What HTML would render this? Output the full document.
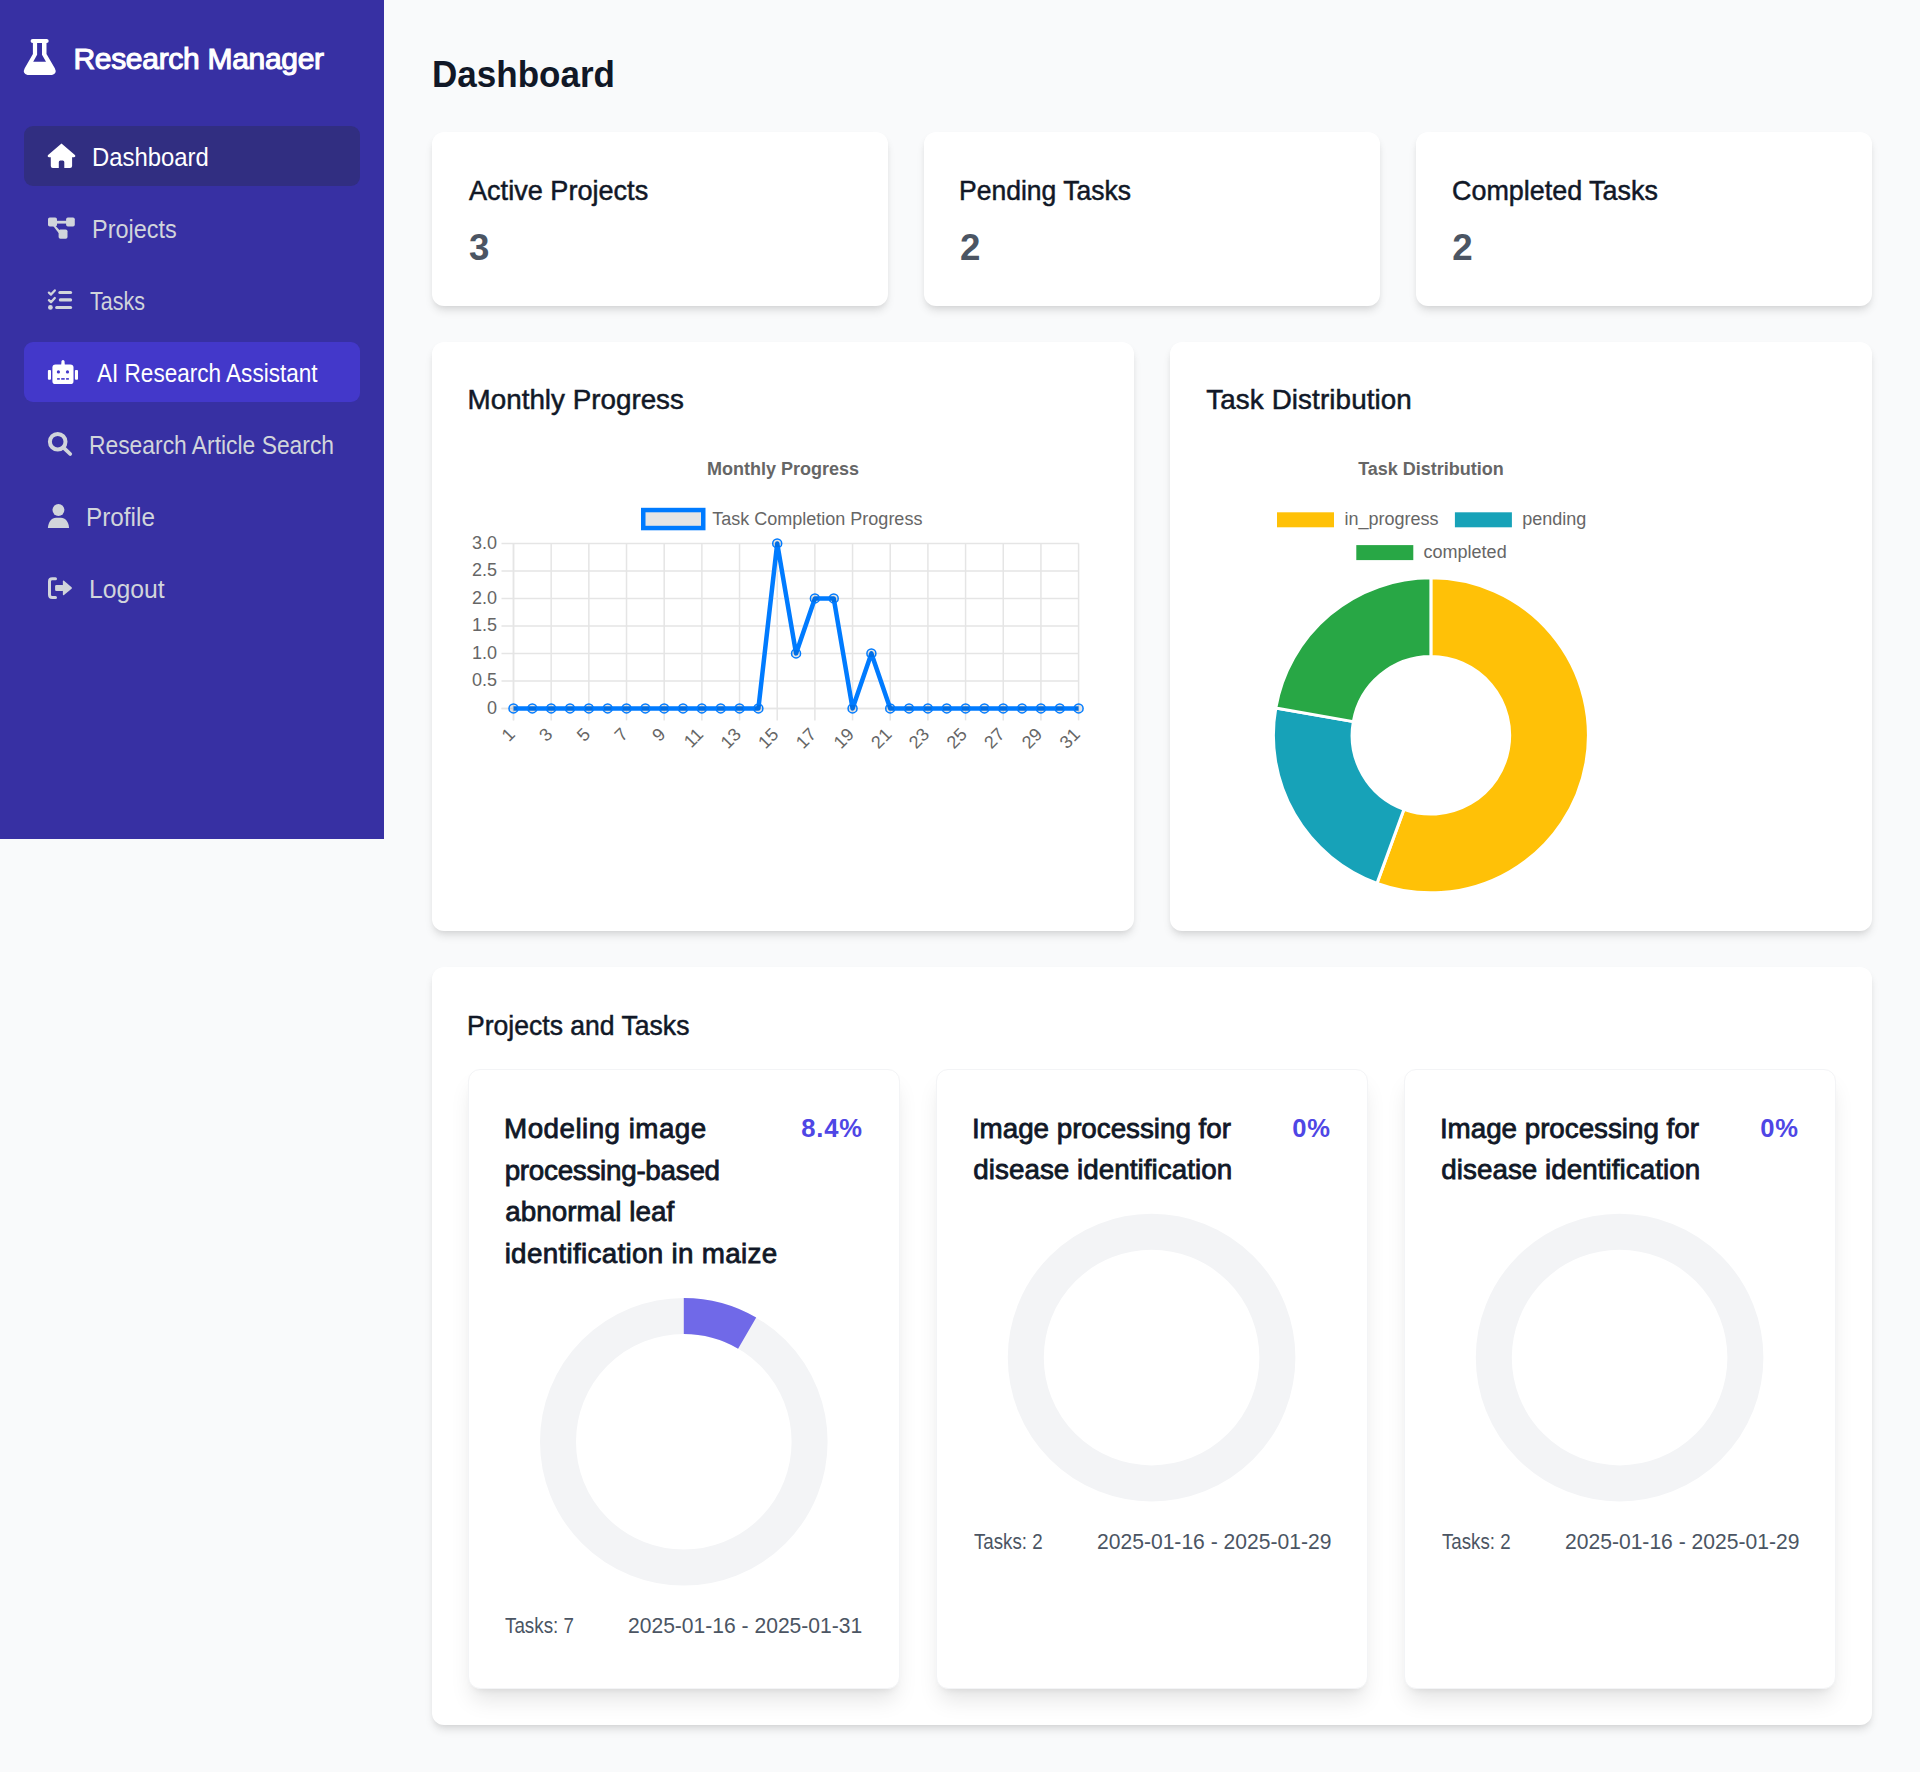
<!DOCTYPE html>
<html><head><meta charset="utf-8"><title>Dashboard - Research Manager</title>
<style>
html,body{margin:0;padding:0}
body{width:1920px;height:1772px;background:#f9fafb;position:relative;overflow:hidden;font-family:"Liberation Sans",sans-serif}
.sb{position:absolute;left:0;top:0;width:384px;height:839px;background:#3730a3}
.nav{position:absolute;left:24px;width:336px;height:60px;border-radius:9px}
.card{position:absolute;background:#fff;border-radius:12px;box-shadow:0 6px 9px -1.5px rgba(0,0,0,.1),0 3px 6px -3px rgba(0,0,0,.1)}
.pcard{position:absolute;background:#fff;border-radius:12px;border:1.5px solid #f3f4f6;box-sizing:border-box;box-shadow:0 15px 22.5px -4.5px rgba(0,0,0,.1),0 6px 9px -6px rgba(0,0,0,.1)}
.t{position:absolute;white-space:nowrap;line-height:1;font-family:"Liberation Sans",sans-serif}
.ov{position:absolute;left:0;top:0;pointer-events:none}
.ct{font-family:"Liberation Sans",sans-serif;font-size:18px;fill:#666}
</style></head>
<body>
<div class="sb"></div>
<div class="nav" style="top:126px;background:#312e81"></div>
<div class="nav" style="top:342px;background:#4338ca"></div>
<div class="card" style="left:432px;top:132px;width:456px;height:174px"></div>
<div class="card" style="left:924px;top:132px;width:456px;height:174px"></div>
<div class="card" style="left:1416px;top:132px;width:456px;height:174px"></div>
<div class="card" style="left:432px;top:342px;width:702px;height:589px"></div>
<div class="card" style="left:1170px;top:342px;width:702px;height:589px"></div>
<div class="card" style="left:432px;top:967px;width:1440px;height:758px"></div>
<div class="pcard" style="left:468px;top:1069px;width:432px;height:620px"></div>
<div class="pcard" style="left:936px;top:1069px;width:432px;height:620px"></div>
<div class="pcard" style="left:1404px;top:1069px;width:432px;height:620px"></div>
<svg class="ov" width="400" height="640" viewBox="0 0 400 640">
<!-- flask -->
<path fill="#fff" fill-rule="evenodd" d="M30.6,41 Q30.6,38.9 32.7,38.9 H46.6 Q48.7,38.9 48.7,41 Q48.7,43.1 46.6,43.1 H46.5 V54 L54.8,68.2 Q57.5,73.5 52,75 H27.5 Q22,73.5 24.7,68.2 L32.9,54 V43.1 H32.7 Q30.6,43.1 30.6,41 Z M37.1,43.1 V54.8 L33.2,61.8 H46 L42,54.8 V43.1 Z"/>
<!-- home -->
<path fill="#fff" d="M61.5,143.6 L75.2,155.3 Q75.8,157.3 74,157.3 H72.1 V166 Q72.1,168 70,168 H64.3 V162 Q64.3,160.5 62.8,160.5 H60.3 Q58.8,160.5 58.8,162 V168 H52.8 Q50.8,168 50.8,166 V157.3 H49 Q47.2,157.3 47.8,155.3 Z"/>
<!-- projects -->
<g fill="#d1d5db">
<rect x="48" y="217.4" width="9" height="9.2" rx="1.8"/>
<rect x="66.1" y="217.4" width="8.7" height="9.2" rx="1.8"/>
<rect x="58.6" y="229.5" width="8.9" height="9.2" rx="1.8"/>
<rect x="56" y="220.8" width="11" height="2.8"/>
<path d="M53.2,226 L55.6,226 L60.8,231.5 L58.6,233 Z"/>
</g>
<!-- tasks -->
<g fill="none" stroke="#d1d5db" stroke-width="2.3" stroke-linecap="round" stroke-linejoin="round">
<polyline points="48.9,292.6 51,294.6 54.8,290.4"/>
<polyline points="48.9,300.2 51,302.2 54.8,298"/>
</g>
<g fill="#d1d5db">
<circle cx="50.4" cy="307.4" r="2.4"/>
<rect x="58.3" y="291" width="13.8" height="3" rx="1.5"/>
<rect x="58.8" y="298.3" width="13.3" height="3.2" rx="1.5"/>
<rect x="55.1" y="305.9" width="17" height="3.2" rx="1.5"/>
</g>
<!-- robot -->
<g fill="#fff">
<rect x="52.4" y="364.4" width="21.1" height="19.7" rx="3.2"/>
<path d="M61.2,365 L61.5,361 Q63,359.2 64.5,361 L64.8,365 Z"/>
<rect x="47.9" y="370.1" width="3.1" height="9.6" rx="1"/>
<rect x="74.9" y="370.1" width="3.1" height="9.6" rx="1"/>
</g>
<g fill="#4338ca">
<circle cx="58.4" cy="371.9" r="1.6"/>
<circle cx="67.5" cy="371.9" r="1.6"/>
<rect x="57.1" y="378.1" width="2.7" height="1.6"/>
<rect x="61.2" y="378.1" width="3.5" height="1.6"/>
<rect x="66.1" y="378.1" width="2.8" height="1.6"/>
</g>
<!-- search -->
<circle cx="57.7" cy="441.7" r="7.8" fill="none" stroke="#d1d5db" stroke-width="4"/>
<line x1="63.8" y1="447.8" x2="70.2" y2="454" stroke="#d1d5db" stroke-width="3.8" stroke-linecap="round"/>
<!-- user -->
<g fill="#d1d5db">
<circle cx="58.45" cy="510" r="5.95"/>
<path d="M47.9,528.1 C48.3,521.5 51.8,517.8 56,517.8 H61 C65.2,517.8 68.7,521.5 69.1,528.1 Z"/>
</g>
<!-- logout -->
<path d="M55.5,578.7 H52.2 Q49.5,578.7 49.5,581.4 V594.7 Q49.5,597.4 52.2,597.4 H55.5" fill="none" stroke="#d1d5db" stroke-width="3" stroke-linecap="round"/>
<rect x="55.1" y="585" width="8.5" height="5.9" rx="1.2" fill="#d1d5db"/>
<path d="M62.9,581.3 Q62.9,580 64,580.8 L71.6,587.2 Q72.3,588 71.6,588.7 L64,595 Q62.9,595.8 62.9,594.5 Z" fill="#d1d5db"/>
</svg>

<svg class="ov" width="1920" height="1772" viewBox="0 0 1920 1772"><line x1="501.5" y1="708.40" x2="1078.6" y2="708.40" stroke="#e5e5e5" stroke-width="1.5"/>
<line x1="501.5" y1="680.90" x2="1078.6" y2="680.90" stroke="#e5e5e5" stroke-width="1.5"/>
<line x1="501.5" y1="653.40" x2="1078.6" y2="653.40" stroke="#e5e5e5" stroke-width="1.5"/>
<line x1="501.5" y1="625.90" x2="1078.6" y2="625.90" stroke="#e5e5e5" stroke-width="1.5"/>
<line x1="501.5" y1="598.40" x2="1078.6" y2="598.40" stroke="#e5e5e5" stroke-width="1.5"/>
<line x1="501.5" y1="570.90" x2="1078.6" y2="570.90" stroke="#e5e5e5" stroke-width="1.5"/>
<line x1="501.5" y1="543.40" x2="1078.6" y2="543.40" stroke="#e5e5e5" stroke-width="1.5"/>
<line x1="513.50" y1="543.4" x2="513.50" y2="720.4" stroke="#e5e5e5" stroke-width="1.5"/>
<line x1="551.17" y1="543.4" x2="551.17" y2="720.4" stroke="#e5e5e5" stroke-width="1.5"/>
<line x1="588.85" y1="543.4" x2="588.85" y2="720.4" stroke="#e5e5e5" stroke-width="1.5"/>
<line x1="626.52" y1="543.4" x2="626.52" y2="720.4" stroke="#e5e5e5" stroke-width="1.5"/>
<line x1="664.19" y1="543.4" x2="664.19" y2="720.4" stroke="#e5e5e5" stroke-width="1.5"/>
<line x1="701.87" y1="543.4" x2="701.87" y2="720.4" stroke="#e5e5e5" stroke-width="1.5"/>
<line x1="739.54" y1="543.4" x2="739.54" y2="720.4" stroke="#e5e5e5" stroke-width="1.5"/>
<line x1="777.21" y1="543.4" x2="777.21" y2="720.4" stroke="#e5e5e5" stroke-width="1.5"/>
<line x1="814.89" y1="543.4" x2="814.89" y2="720.4" stroke="#e5e5e5" stroke-width="1.5"/>
<line x1="852.56" y1="543.4" x2="852.56" y2="720.4" stroke="#e5e5e5" stroke-width="1.5"/>
<line x1="890.23" y1="543.4" x2="890.23" y2="720.4" stroke="#e5e5e5" stroke-width="1.5"/>
<line x1="927.91" y1="543.4" x2="927.91" y2="720.4" stroke="#e5e5e5" stroke-width="1.5"/>
<line x1="965.58" y1="543.4" x2="965.58" y2="720.4" stroke="#e5e5e5" stroke-width="1.5"/>
<line x1="1003.25" y1="543.4" x2="1003.25" y2="720.4" stroke="#e5e5e5" stroke-width="1.5"/>
<line x1="1040.93" y1="543.4" x2="1040.93" y2="720.4" stroke="#e5e5e5" stroke-width="1.5"/>
<line x1="1078.60" y1="543.4" x2="1078.60" y2="720.4" stroke="#e5e5e5" stroke-width="1.5"/>
<line x1="513.5" y1="543.4" x2="513.5" y2="720.4" stroke="#e5e5e5" stroke-width="1.5"/>
<line x1="501.5" y1="708.4" x2="1078.6" y2="708.4" stroke="#e5e5e5" stroke-width="1.5"/>
<text x="497" y="713.90" text-anchor="end" class="ct">0</text>
<text x="497" y="686.40" text-anchor="end" class="ct">0.5</text>
<text x="497" y="658.90" text-anchor="end" class="ct">1.0</text>
<text x="497" y="631.40" text-anchor="end" class="ct">1.5</text>
<text x="497" y="603.90" text-anchor="end" class="ct">2.0</text>
<text x="497" y="576.40" text-anchor="end" class="ct">2.5</text>
<text x="497" y="548.90" text-anchor="end" class="ct">3.0</text>
<polyline fill="none" stroke="#007bff" stroke-width="4.5" stroke-linejoin="round" points="513.50,708.40 532.34,708.40 551.17,708.40 570.01,708.40 588.85,708.40 607.68,708.40 626.52,708.40 645.36,708.40 664.19,708.40 683.03,708.40 701.87,708.40 720.70,708.40 739.54,708.40 758.38,708.40 777.21,543.40 796.05,653.40 814.89,598.40 833.72,598.40 852.56,708.40 871.40,653.40 890.23,708.40 909.07,708.40 927.91,708.40 946.74,708.40 965.58,708.40 984.42,708.40 1003.25,708.40 1022.09,708.40 1040.93,708.40 1059.76,708.40 1078.60,708.40"/>
<circle cx="513.50" cy="708.40" r="4.5" fill="rgba(0,0,0,0.1)" stroke="#007bff" stroke-width="1.5"/>
<circle cx="532.34" cy="708.40" r="4.5" fill="rgba(0,0,0,0.1)" stroke="#007bff" stroke-width="1.5"/>
<circle cx="551.17" cy="708.40" r="4.5" fill="rgba(0,0,0,0.1)" stroke="#007bff" stroke-width="1.5"/>
<circle cx="570.01" cy="708.40" r="4.5" fill="rgba(0,0,0,0.1)" stroke="#007bff" stroke-width="1.5"/>
<circle cx="588.85" cy="708.40" r="4.5" fill="rgba(0,0,0,0.1)" stroke="#007bff" stroke-width="1.5"/>
<circle cx="607.68" cy="708.40" r="4.5" fill="rgba(0,0,0,0.1)" stroke="#007bff" stroke-width="1.5"/>
<circle cx="626.52" cy="708.40" r="4.5" fill="rgba(0,0,0,0.1)" stroke="#007bff" stroke-width="1.5"/>
<circle cx="645.36" cy="708.40" r="4.5" fill="rgba(0,0,0,0.1)" stroke="#007bff" stroke-width="1.5"/>
<circle cx="664.19" cy="708.40" r="4.5" fill="rgba(0,0,0,0.1)" stroke="#007bff" stroke-width="1.5"/>
<circle cx="683.03" cy="708.40" r="4.5" fill="rgba(0,0,0,0.1)" stroke="#007bff" stroke-width="1.5"/>
<circle cx="701.87" cy="708.40" r="4.5" fill="rgba(0,0,0,0.1)" stroke="#007bff" stroke-width="1.5"/>
<circle cx="720.70" cy="708.40" r="4.5" fill="rgba(0,0,0,0.1)" stroke="#007bff" stroke-width="1.5"/>
<circle cx="739.54" cy="708.40" r="4.5" fill="rgba(0,0,0,0.1)" stroke="#007bff" stroke-width="1.5"/>
<circle cx="758.38" cy="708.40" r="4.5" fill="rgba(0,0,0,0.1)" stroke="#007bff" stroke-width="1.5"/>
<circle cx="777.21" cy="543.40" r="4.5" fill="rgba(0,0,0,0.1)" stroke="#007bff" stroke-width="1.5"/>
<circle cx="796.05" cy="653.40" r="4.5" fill="rgba(0,0,0,0.1)" stroke="#007bff" stroke-width="1.5"/>
<circle cx="814.89" cy="598.40" r="4.5" fill="rgba(0,0,0,0.1)" stroke="#007bff" stroke-width="1.5"/>
<circle cx="833.72" cy="598.40" r="4.5" fill="rgba(0,0,0,0.1)" stroke="#007bff" stroke-width="1.5"/>
<circle cx="852.56" cy="708.40" r="4.5" fill="rgba(0,0,0,0.1)" stroke="#007bff" stroke-width="1.5"/>
<circle cx="871.40" cy="653.40" r="4.5" fill="rgba(0,0,0,0.1)" stroke="#007bff" stroke-width="1.5"/>
<circle cx="890.23" cy="708.40" r="4.5" fill="rgba(0,0,0,0.1)" stroke="#007bff" stroke-width="1.5"/>
<circle cx="909.07" cy="708.40" r="4.5" fill="rgba(0,0,0,0.1)" stroke="#007bff" stroke-width="1.5"/>
<circle cx="927.91" cy="708.40" r="4.5" fill="rgba(0,0,0,0.1)" stroke="#007bff" stroke-width="1.5"/>
<circle cx="946.74" cy="708.40" r="4.5" fill="rgba(0,0,0,0.1)" stroke="#007bff" stroke-width="1.5"/>
<circle cx="965.58" cy="708.40" r="4.5" fill="rgba(0,0,0,0.1)" stroke="#007bff" stroke-width="1.5"/>
<circle cx="984.42" cy="708.40" r="4.5" fill="rgba(0,0,0,0.1)" stroke="#007bff" stroke-width="1.5"/>
<circle cx="1003.25" cy="708.40" r="4.5" fill="rgba(0,0,0,0.1)" stroke="#007bff" stroke-width="1.5"/>
<circle cx="1022.09" cy="708.40" r="4.5" fill="rgba(0,0,0,0.1)" stroke="#007bff" stroke-width="1.5"/>
<circle cx="1040.93" cy="708.40" r="4.5" fill="rgba(0,0,0,0.1)" stroke="#007bff" stroke-width="1.5"/>
<circle cx="1059.76" cy="708.40" r="4.5" fill="rgba(0,0,0,0.1)" stroke="#007bff" stroke-width="1.5"/>
<circle cx="1078.60" cy="708.40" r="4.5" fill="rgba(0,0,0,0.1)" stroke="#007bff" stroke-width="1.5"/>
<text class="ct" text-anchor="end" transform="translate(516.00,735.5) rotate(-45)">1</text>
<text class="ct" text-anchor="end" transform="translate(553.67,735.5) rotate(-45)">3</text>
<text class="ct" text-anchor="end" transform="translate(591.35,735.5) rotate(-45)">5</text>
<text class="ct" text-anchor="end" transform="translate(629.02,735.5) rotate(-45)">7</text>
<text class="ct" text-anchor="end" transform="translate(666.69,735.5) rotate(-45)">9</text>
<text class="ct" text-anchor="end" transform="translate(704.37,735.5) rotate(-45)">11</text>
<text class="ct" text-anchor="end" transform="translate(742.04,735.5) rotate(-45)">13</text>
<text class="ct" text-anchor="end" transform="translate(779.71,735.5) rotate(-45)">15</text>
<text class="ct" text-anchor="end" transform="translate(817.39,735.5) rotate(-45)">17</text>
<text class="ct" text-anchor="end" transform="translate(855.06,735.5) rotate(-45)">19</text>
<text class="ct" text-anchor="end" transform="translate(892.73,735.5) rotate(-45)">21</text>
<text class="ct" text-anchor="end" transform="translate(930.41,735.5) rotate(-45)">23</text>
<text class="ct" text-anchor="end" transform="translate(968.08,735.5) rotate(-45)">25</text>
<text class="ct" text-anchor="end" transform="translate(1005.75,735.5) rotate(-45)">27</text>
<text class="ct" text-anchor="end" transform="translate(1043.43,735.5) rotate(-45)">29</text>
<text class="ct" text-anchor="end" transform="translate(1081.10,735.5) rotate(-45)">31</text>
<text x="783" y="475" text-anchor="middle" class="ct" font-weight="700">Monthly Progress</text>
<rect x="643.25" y="510.05" width="60" height="18" fill="rgba(0,0,0,0.1)" stroke="#007bff" stroke-width="4.5"/>
<text x="712.3" y="524.8" class="ct">Task Completion Progress</text>
<path d="M1430.90,577.80 A157.5,157.5 0 1 1 1377.03,883.30 L1403.97,809.30 A78.75,78.75 0 1 0 1430.90,656.55 Z" fill="#ffc107" stroke="#fff" stroke-width="3"/>
<path d="M1377.03,883.30 A157.5,157.5 0 0 1 1275.79,707.95 L1353.35,721.63 A78.75,78.75 0 0 0 1403.97,809.30 Z" fill="#17a2b8" stroke="#fff" stroke-width="3"/>
<path d="M1275.79,707.95 A157.5,157.5 0 0 1 1430.90,577.80 L1430.90,656.55 A78.75,78.75 0 0 0 1353.35,721.63 Z" fill="#28a745" stroke="#fff" stroke-width="3"/>
<text x="1431" y="474.7" text-anchor="middle" class="ct" font-weight="700">Task Distribution</text>
<rect x="1275.5" y="510.8" width="60" height="18" fill="#ffc107" stroke="#fff" stroke-width="3"/>
<text x="1344.5" y="525.3" class="ct">in_progress</text>
<rect x="1453.4" y="510.8" width="60" height="18" fill="#17a2b8" stroke="#fff" stroke-width="3"/>
<text x="1522.2" y="525.3" class="ct">pending</text>
<rect x="1354.8" y="543.6" width="60" height="18" fill="#28a745" stroke="#fff" stroke-width="3"/>
<text x="1423.6" y="558.1" class="ct">completed</text>
<circle cx="683.8" cy="1441.8" r="125.80000000000001" fill="none" stroke="#f3f4f6" stroke-width="36.000000000000014"/>
<path d="M683.80,1298.00 A143.8,143.8 0 0 1 756.22,1317.57 L738.09,1348.67 A107.8,107.8 0 0 0 683.80,1334.00 Z" fill="rgba(79,70,229,0.8)"/>
<circle cx="1151.6" cy="1357.6" r="125.80000000000001" fill="none" stroke="#f3f4f6" stroke-width="36.000000000000014"/>
<circle cx="1619.6" cy="1357.6" r="125.80000000000001" fill="none" stroke="#f3f4f6" stroke-width="36.000000000000014"/></svg>
<div class="t" style="left:73.40px;top:43.81px;font-size:30px;letter-spacing:-0.296px;font-weight:400;color:#ffffff;-webkit-text-stroke:1.1px #ffffff">Research Manager</div>
<div class="t" style="left:91.89px;top:144.91px;font-size:25.5px;transform:scaleX(0.9367);transform-origin:0 0;font-weight:400;color:#ffffff">Dashboard</div>
<div class="t" style="left:91.92px;top:216.91px;font-size:25.5px;transform:scaleX(0.9193);transform-origin:0 0;font-weight:400;color:#d1d5db">Projects</div>
<div class="t" style="left:89.77px;top:288.61px;font-size:25.5px;transform:scaleX(0.8418);transform-origin:0 0;font-weight:400;color:#d1d5db">Tasks</div>
<div class="t" style="left:96.90px;top:360.71px;font-size:25.5px;transform:scaleX(0.8842);transform-origin:0 0;font-weight:400;color:#ffffff">AI Research Assistant</div>
<div class="t" style="left:89.42px;top:432.71px;font-size:25.5px;transform:scaleX(0.8957);transform-origin:0 0;font-weight:400;color:#d1d5db">Research Article Search</div>
<div class="t" style="left:86.15px;top:504.71px;font-size:25.5px;transform:scaleX(0.9536);transform-origin:0 0;font-weight:400;color:#d1d5db">Profile</div>
<div class="t" style="left:89.27px;top:576.71px;font-size:25.5px;transform:scaleX(0.9703);transform-origin:0 0;font-weight:400;color:#d1d5db">Logout</div>
<div class="t" style="left:432.20px;top:55.68px;font-size:37px;transform:scaleX(0.9466);transform-origin:0 0;font-weight:700;color:#111827">Dashboard</div>
<div class="t" style="left:468.90px;top:176.67px;font-size:27.8px;transform:scaleX(0.9748);transform-origin:0 0;font-weight:400;color:#111827;-webkit-text-stroke:0.5px #111827">Active Projects</div>
<div class="t" style="left:468.97px;top:229.83px;font-size:36.7px;letter-spacing:0.000px;font-weight:700;color:#4b5563">3</div>
<div class="t" style="left:959.28px;top:176.67px;font-size:27.8px;transform:scaleX(0.9536);transform-origin:0 0;font-weight:400;color:#111827;-webkit-text-stroke:0.5px #111827">Pending Tasks</div>
<div class="t" style="left:959.90px;top:229.83px;font-size:36.7px;letter-spacing:0.000px;font-weight:700;color:#4b5563">2</div>
<div class="t" style="left:1451.65px;top:176.67px;font-size:27.8px;transform:scaleX(0.9678);transform-origin:0 0;font-weight:400;color:#111827;-webkit-text-stroke:0.5px #111827">Completed Tasks</div>
<div class="t" style="left:1452.20px;top:229.83px;font-size:36.7px;letter-spacing:0.000px;font-weight:700;color:#4b5563">2</div>
<div class="t" style="left:467.58px;top:386.47px;font-size:27.8px;letter-spacing:0.004px;font-weight:400;color:#111827;-webkit-text-stroke:0.5px #111827">Monthly Progress</div>
<div class="t" style="left:1206.24px;top:386.47px;font-size:27.8px;letter-spacing:0.105px;font-weight:400;color:#111827;-webkit-text-stroke:0.5px #111827">Task Distribution</div>
<div class="t" style="left:467.08px;top:1011.97px;font-size:27.8px;transform:scaleX(0.9555);transform-origin:0 0;font-weight:400;color:#111827;-webkit-text-stroke:0.5px #111827">Projects and Tasks</div>
<div class="t" style="left:504.08px;top:1114.77px;font-size:27.8px;letter-spacing:0.452px;font-weight:400;color:#111827;-webkit-text-stroke:0.8px #111827">Modeling image</div>
<div class="t" style="left:504.63px;top:1156.57px;font-size:27.8px;letter-spacing:-0.267px;font-weight:400;color:#111827;-webkit-text-stroke:0.8px #111827">processing-based</div>
<div class="t" style="left:505.19px;top:1198.37px;font-size:27.8px;letter-spacing:0.051px;font-weight:400;color:#111827;-webkit-text-stroke:0.8px #111827">abnormal leaf</div>
<div class="t" style="left:504.63px;top:1240.17px;font-size:27.8px;letter-spacing:0.309px;font-weight:400;color:#111827;-webkit-text-stroke:0.8px #111827">identification in maize</div>
<div class="t" style="left:801.33px;top:1115.83px;font-size:25.6px;letter-spacing:0.769px;font-weight:700;color:#4f46e5">8.4%</div>
<div class="t" style="left:971.90px;top:1114.57px;font-size:27.8px;letter-spacing:-0.028px;font-weight:400;color:#111827;-webkit-text-stroke:0.8px #111827">Image processing for</div>
<div class="t" style="left:973.29px;top:1156.37px;font-size:27.8px;letter-spacing:0.037px;font-weight:400;color:#111827;-webkit-text-stroke:0.8px #111827">disease identification</div>
<div class="t" style="left:1292.13px;top:1115.83px;font-size:25.6px;letter-spacing:0.958px;font-weight:700;color:#4f46e5">0%</div>
<div class="t" style="left:973.53px;top:1531.43px;font-size:21.7px;transform:scaleX(0.8623);transform-origin:0 0;font-weight:400;color:#4b5563">Tasks: 2</div>
<div class="t" style="left:1096.65px;top:1531.43px;font-size:21.7px;transform:scaleX(0.9720);transform-origin:0 0;font-weight:400;color:#4b5563">2025-01-16 - 2025-01-29</div>
<div class="t" style="left:1439.90px;top:1114.57px;font-size:27.8px;letter-spacing:-0.028px;font-weight:400;color:#111827;-webkit-text-stroke:0.8px #111827">Image processing for</div>
<div class="t" style="left:1441.29px;top:1156.37px;font-size:27.8px;letter-spacing:0.037px;font-weight:400;color:#111827;-webkit-text-stroke:0.8px #111827">disease identification</div>
<div class="t" style="left:1760.13px;top:1115.83px;font-size:25.6px;letter-spacing:0.958px;font-weight:700;color:#4f46e5">0%</div>
<div class="t" style="left:1441.53px;top:1531.43px;font-size:21.7px;transform:scaleX(0.8623);transform-origin:0 0;font-weight:400;color:#4b5563">Tasks: 2</div>
<div class="t" style="left:1564.65px;top:1531.43px;font-size:21.7px;transform:scaleX(0.9720);transform-origin:0 0;font-weight:400;color:#4b5563">2025-01-16 - 2025-01-29</div>
<div class="t" style="left:505.12px;top:1615.23px;font-size:21.7px;transform:scaleX(0.8662);transform-origin:0 0;font-weight:400;color:#4b5563">Tasks: 7</div>
<div class="t" style="left:628.15px;top:1615.23px;font-size:21.7px;transform:scaleX(0.9712);transform-origin:0 0;font-weight:400;color:#4b5563">2025-01-16 - 2025-01-31</div>
</body></html>
